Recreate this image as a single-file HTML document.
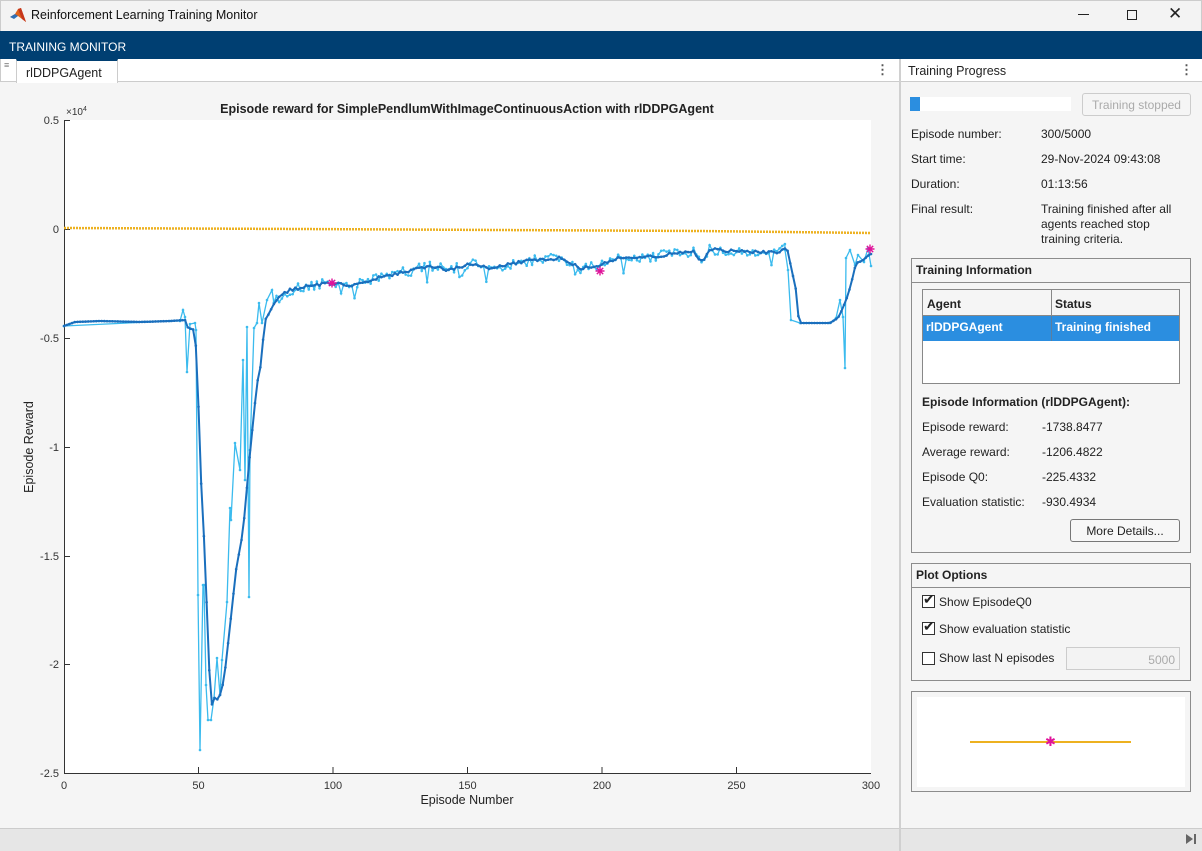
<!DOCTYPE html>
<html><head><meta charset="utf-8"><style>
*{box-sizing:border-box;margin:0;padding:0}
body{width:1202px;height:851px;overflow:hidden;font-family:"Liberation Sans",sans-serif;font-size:12px;color:#222;background:#f5f5f5;position:relative}
.abs{position:absolute}
.tb{left:0;top:0;width:1202px;height:31px;background:#f3f3f3;border:1px solid #ccc;border-bottom:none}
.blue{left:0;top:31px;width:1202px;height:28px;background:#003f72;color:#fff;font-size:12px;padding:9px 0 0 9px}
.lbl{font-size:12px}
.grp{border:1px solid #8c8c8c;}
.gh{height:24px;border-bottom:1px solid #8c8c8c;font-weight:bold;padding:4px 4px;font-size:12px}
.cb{position:absolute;width:13px;height:13px;border:1px solid #333;background:#fff}
</style></head><body>
<div class="abs tb"></div>
<svg class="abs" style="left:9px;top:7px" width="18" height="16" viewBox="0 0 18 16"><path d="M1 10 L6 7 L9 2 L12 1 L17 15 L13 12 L9 9 Z" fill="#e0621b"/><path d="M1 10 L6 7 L9 9 L5 12Z" fill="#2f6fb5"/><path d="M9 2 L12 1 L17 15 L13 12Z" fill="#c6361b"/></svg>
<div class="abs" style="left:31px;top:8px;font-size:12.5px;color:#111">Reinforcement Learning Training Monitor</div>
<div class="abs" style="left:1078px;top:14px;width:11px;height:1px;background:#222"></div>
<div class="abs" style="left:1127px;top:10px;width:10px;height:10px;border:1px solid #222"></div>
<div class="abs" style="left:1168px;top:4px;font-size:17px;color:#222">✕</div>
<div class="abs blue">TRAINING MONITOR</div>
<div class="abs" style="left:0;top:59px;width:900px;height:23px;background:#fff;border-bottom:1px solid #ccc;border-left:1px solid #ccc"></div>
<div class="abs" style="left:4px;top:63px;font-size:9px;color:#777;line-height:4px">≡</div>
<div class="abs" style="left:16px;top:59px;width:102px;height:24px;background:#fff;border-left:1px solid #ccc;border-right:1px solid #ccc;border-top:2px solid #003f72;padding:5px 0 0 9px;font-size:12.5px">rlDDPGAgent</div>
<div class="abs" style="left:876px;top:62px;font-size:13px;font-weight:bold;color:#555">⋮</div>
<div class="abs" style="left:899px;top:59px;width:2px;height:792px;background:#d0d0d0"></div>
<div class="abs" style="left:901px;top:59px;width:301px;height:23px;background:#fff;border-bottom:1px solid #ccc;padding:5px 0 0 7px;font-size:12.5px">Training Progress</div>
<div class="abs" style="left:1180px;top:62px;font-size:13px;font-weight:bold;color:#555">⋮</div>
<svg class="abs" style="left:0;top:83px" width="899" height="745" viewBox="0 83 899 745" id="plot">
<rect x="64" y="120" width="807" height="653" fill="#fff"/>
<text x="467" y="113" font-size="12.5" font-weight="bold" text-anchor="middle" fill="#222" font-family="Liberation Sans">Episode reward for SimplePendlumWithImageContinuousAction with rlDDPGAgent</text>
<text x="66" y="115" font-size="10" fill="#333" font-family="Liberation Sans">×10<tspan dy="-4" font-size="7">4</tspan></text>
<g font-size="11" fill="#333" font-family="Liberation Sans" text-anchor="end">
<text x="59" y="124">0.5</text><text x="59" y="233">0</text><text x="59" y="342">-0.5</text><text x="59" y="451">-1</text><text x="59" y="560">-1.5</text><text x="59" y="668">-2</text><text x="59" y="777">-2.5</text></g>
<g font-size="11" fill="#333" font-family="Liberation Sans" text-anchor="middle">
<text x="64" y="789">0</text><text x="198.5" y="789">50</text><text x="333" y="789">100</text><text x="467.5" y="789">150</text><text x="602" y="789">200</text><text x="736.5" y="789">250</text><text x="871" y="789">300</text></g>
<text x="467" y="804" font-size="12.5" text-anchor="middle" fill="#222" font-family="Liberation Sans">Episode Number</text>
<text transform="translate(33,447) rotate(-90)" font-size="12.5" text-anchor="middle" fill="#222" font-family="Liberation Sans">Episode Reward</text>
<g stroke="#333" stroke-width="1" fill="none"><path d="M64.5 120V773.5H871"/>
<path d="M64 120.5h6M64 229.5h6M64 338.5h6M64 447.5h6M64 556.5h6M64 664.5h6M198.5 773v-6M333 773v-6M467.5 773v-6M602 773v-6M736.5 773v-6"/></g>
<path d="M64 228 L300 229 L500 230 L700 231 L871 233" stroke="#EDB120" stroke-width="2.5" fill="none" stroke-dasharray="2 1"/>
<g id="lines"></g>
<g stroke="#e0139a" stroke-width="1.4" id="stars"></g>
</svg>
<div class="abs" style="left:910px;top:97px;width:161px;height:14px;background:#fff"></div>
<div class="abs" style="left:910px;top:97px;width:10px;height:14px;background:#2b8ee0"></div>
<div class="abs" style="left:1082px;top:93px;width:109px;height:23px;border:1px solid #ccc;border-radius:3px;color:#aaa;text-align:center;padding-top:4px;font-size:12px">Training stopped</div>
<div class="abs lbl" style="left:911px;top:127px">Episode number:</div><div class="abs lbl" style="left:1041px;top:127px">300/5000</div>
<div class="abs lbl" style="left:911px;top:152px">Start time:</div><div class="abs lbl" style="left:1041px;top:152px">29-Nov-2024 09:43:08</div>
<div class="abs lbl" style="left:911px;top:177px">Duration:</div><div class="abs lbl" style="left:1041px;top:177px">01:13:56</div>
<div class="abs lbl" style="left:911px;top:202px">Final result:</div><div class="abs lbl" style="left:1041px;top:202px;line-height:15px;width:150px">Training finished after all agents reached stop training criteria.</div>
<div class="abs grp" style="left:911px;top:258px;width:280px;height:295px"><div class="gh">Training Information</div></div>
<div class="abs" style="left:922px;top:289px;width:258px;height:95px;border:1px solid #888;background:#fff"></div>
<div class="abs" style="left:922px;top:289px;width:258px;height:27px;border:1px solid #888;background:#f5f5f5"></div>
<div class="abs" style="left:1051px;top:289px;width:1px;height:52px;background:#888"></div>
<div class="abs" style="left:927px;top:297px;font-weight:bold">Agent</div>
<div class="abs" style="left:1055px;top:297px;font-weight:bold">Status</div>
<div class="abs" style="left:923px;top:316px;width:256px;height:25px;background:#2b8ee0"></div>
<div class="abs" style="left:1051px;top:316px;width:1px;height:25px;background:#5a7ea0"></div>
<div class="abs" style="left:926px;top:320px;color:#fff;font-weight:bold">rlDDPGAgent</div>
<div class="abs" style="left:1055px;top:320px;color:#fff;font-weight:bold">Training finished</div>
<div class="abs" style="left:922px;top:395px;font-weight:bold">Episode Information (rlDDPGAgent):</div>
<div class="abs lbl" style="left:922px;top:420px">Episode reward:</div><div class="abs lbl" style="left:1042px;top:420px">-1738.8477</div>
<div class="abs lbl" style="left:922px;top:445px">Average reward:</div><div class="abs lbl" style="left:1042px;top:445px">-1206.4822</div>
<div class="abs lbl" style="left:922px;top:470px">Episode Q0:</div><div class="abs lbl" style="left:1042px;top:470px">-225.4332</div>
<div class="abs lbl" style="left:922px;top:495px">Evaluation statistic:</div><div class="abs lbl" style="left:1042px;top:495px">-930.4934</div>
<div class="abs" style="left:1070px;top:519px;width:110px;height:23px;border:1px solid #777;border-radius:3px;background:#f7f7f7;text-align:center;padding-top:4px">More Details...</div>
<div class="abs grp" style="left:911px;top:563px;width:280px;height:118px"><div class="gh">Plot Options</div></div>
<div class="cb" style="left:922px;top:595px"></div><div class="abs" style="left:923px;top:591px;font-size:14px">✔</div><div class="abs lbl" style="left:939px;top:595px">Show EpisodeQ0</div>
<div class="cb" style="left:922px;top:622px"></div><div class="abs" style="left:923px;top:618px;font-size:14px">✔</div><div class="abs lbl" style="left:939px;top:622px">Show evaluation statistic</div>
<div class="cb" style="left:922px;top:652px"></div><div class="abs lbl" style="left:939px;top:651px">Show last N episodes</div>
<div class="abs" style="left:1066px;top:647px;width:114px;height:23px;border:1px solid #ccc;background:#f3f3f3;color:#aaa;text-align:right;padding:5px 4px 0 0">5000</div>
<div class="abs grp" style="left:911px;top:691px;width:280px;height:101px"></div>
<div class="abs" style="left:917px;top:697px;width:268px;height:90px;background:#fff"></div>
<div class="abs" style="left:970px;top:741px;width:161px;height:1.5px;background:#EDB120"></div>
<div class="abs" style="left:1045px;top:734px;color:#e0139a;font-size:13px">✱</div>
<div class="abs" style="left:0;top:828px;width:1202px;height:23px;background:#e6e6e6;border-top:1px solid #ccc"></div>
<div class="abs" style="left:899px;top:828px;width:2px;height:23px;background:#d0d0d0"></div>
<svg class="abs" style="left:1185px;top:833px" width="12" height="12"><path d="M1 1L8 6L1 11Z" fill="#666"/><rect x="9" y="1" width="2" height="10" fill="#666"/></svg>
<script>
function interp(keys,x){for(var i=0;i<keys.length-1;i++){if(x>=keys[i][0]&&x<=keys[i+1][0]){var a=keys[i],b=keys[i+1];var t=(x-a[0])/(b[0]-a[0]||1);return a[1]+(b[1]-a[1])*t;}}return keys[keys.length-1][1];}
function nz(i){var s=Math.sin(i*12.9898+3.1)*43758.5453;return (s-Math.floor(s))*2-1;}
var dark=[[64,326],[75,322],[100,321],[140,322],[170,321],[185,320],[188,328],[195,330],[198,388],[200,463],[203,515],[206,587],[209,667],[212,705],[215,697],[218,700],[220,695],[224,680],[230,626],[236,570],[243,532],[250,453],[257,383],[260,371],[265,320],[270,312],[275,300],[290,290],[310,286],[330,283],[350,286],[380,277],[410,271],[430,266],[450,270],[470,264],[490,268],[520,262],[560,258],[580,268],[600,265],[620,257],[640,258],[660,256],[680,252],[694,252],[702,262],[710,249],[730,251],[760,252],[775,253],[787,248],[796,290],[799,323],[830,323],[838,318],[842,310],[848,295],[852,280],[856,263],[862,261],[870,254]];
var lightA=[[64,326],[170,321],[180,321],[183,310],[185,317],[187,372],[190,324],[195,323],[196,330],[198,595],[200,750],[203,585],[204,585],[206,685],[208,720],[211,720],[214,698],[217,658],[220,695],[222,660],[227,602],[230,508],[231,520],[235,443],[240,470],[243,360],[245,480],[247,327],[249,597],[250,450],[254,328],[257,323],[259,303],[262,323],[267,300],[272,290]];
var lightB=[[785,250],[788,270],[791,320],[800,323],[830,323],[836,318],[840,300],[843,317],[845,368],[846,258],[850,250],[855,265],[858,255],[864,262],[868,248],[871,266]];
function build(isLight){var pts=[];
 if(isLight){lightA.forEach(function(p){pts.push(p)});}
 for(var e=0;e<=300;e++){var x=64+e*2.69;
  if(isLight){if(x<=272||x>=785)continue;pts.push([x,interp(dark,x)+nz(e)*5+(nz(e*7)>0.9?12:0)]);}
  else{var y=interp(dark,x);if(x>272&&x<785)y+=nz(e+50)*1.5;pts.push([x,y]);}
 }
 if(isLight){lightB.forEach(function(p){pts.push(p)});}
 return pts;}
var g=document.getElementById('lines'),ns='http://www.w3.org/2000/svg';
function draw(pts,col,w){var p=document.createElementNS(ns,'polyline');p.setAttribute('points',pts.map(function(q){return q[0].toFixed(1)+','+q[1].toFixed(1)}).join(' '));p.setAttribute('fill','none');p.setAttribute('stroke',col);p.setAttribute('stroke-width',w);g.appendChild(p);
 pts.forEach(function(q){var c=document.createElementNS(ns,'circle');c.setAttribute('cx',q[0]);c.setAttribute('cy',q[1]);c.setAttribute('r',1.3);c.setAttribute('fill',col);g.appendChild(c);});}
draw(build(true),'#3bbbee',1.3);
draw(build(false),'#1a6fbd',2);
var st=document.getElementById('stars');
[[332,283],[600,271],[870,249]].forEach(function(s){var x=s[0],y=s[1],r=4.5,d='';for(var k=0;k<4;k++){var a=k*Math.PI/4;d+='M'+(x-r*Math.cos(a))+' '+(y-r*Math.sin(a))+'L'+(x+r*Math.cos(a))+' '+(y+r*Math.sin(a));}var p=document.createElementNS(ns,'path');p.setAttribute('d',d);st.appendChild(p);});
</script>
</body></html>
